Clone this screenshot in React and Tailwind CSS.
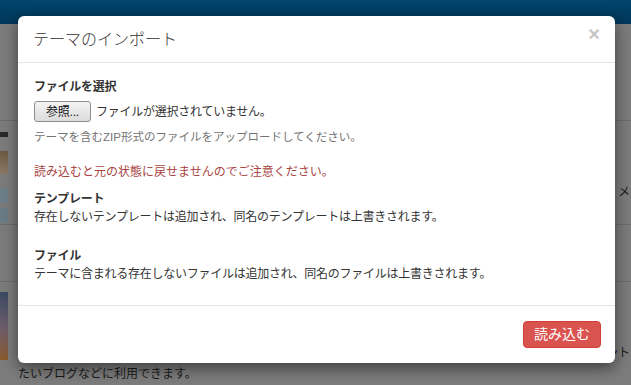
import React from 'react';

const font = { fontFamily: '"Liberation Sans", "Noto Sans CJK JP", sans-serif' };

function BackgroundPage() {
  // dimmed page behind the modal backdrop
  return (
    <div className="flex h-full flex-col bg-[#7c7c7c]">
      <div className="h-[24px] bg-gradient-to-b from-[#02456d] to-[#003759]" />
      <div className="h-[97px] border-b border-[#6c6c6c]" />
      <div className="flex h-[104px] flex-col border-b border-[#6c6c6c] pt-[11px]">
        <div className="h-[5px] w-[8px] bg-[#2a2a2a]" />
        <div className="mt-[14px] h-[23px] w-[8px] bg-gradient-to-b from-[#6e5a44] to-[#8a7a66]" />
        <div className="mt-[14px] h-[15px] w-[8px] bg-[#6d7f88]" />
        <div className="mt-[5px] h-[15px] w-[8px] bg-[#6a7d86]" />
        <div className="flex justify-end pr-[1px]">
          <span className="-mt-[40px] text-[12px] text-[#1a1a1a]">メ</span>
        </div>
      </div>
      <div className="h-[57px] border-b border-[#6c6c6c]" />
      <div className="flex flex-1 flex-col">
        <div className="mt-[10px] h-[68px] w-[8px] bg-gradient-to-b from-[#3b4a63] via-[#6b5d6c] to-[#8a5a2a]" />
        <div className="flex justify-end pr-[1px]">
          <span className="-mt-[16px] text-[12px] text-[#1a1a1a]">ント</span>
        </div>
        <div className="mt-[4px] pl-[18px] text-[12px] leading-[16px] text-[#1a1a1a]">たいブログなどに利用できます。</div>
      </div>
    </div>
  );
}

export default function App() {
  return (
    <div className="relative h-[385px] w-[631px] overflow-hidden" style={font}>
      <BackgroundPage />

      <div className="absolute left-[18px] top-[16px] flex h-[347px] w-[597px] flex-col rounded-[6px] bg-white shadow-[0_5px_15px_rgba(0,0,0,0.5)]">
        {/* header */}
        <div className="flex h-[47px] items-start justify-between border-b border-[#e5e5e5] pl-[15px] pr-[15px]">
          <h4 className="pt-[13px] text-[16px] font-light leading-[22px] text-[#333]">テーマのインポート</h4>
          <button className="pt-[8px] text-[20px] font-bold leading-[20px] text-[#c6c6c6]">×</button>
        </div>

        {/* body */}
        <div className="flex-1 px-[16px] pt-[15px] text-[12px] leading-[18px] tracking-[-0.25px] text-[#333]">
          <label className="block font-bold">ファイルを選択</label>
          <div className="mt-[5px] flex items-center gap-[5px]">
            <span className="flex h-[21px] w-[57px] items-center justify-center rounded-[3px] border border-[#8e8e8e] bg-gradient-to-b from-[#f4f4f4] to-[#dcdcdc] text-[12px] text-[#111]">
              参照...
            </span>
            <span>ファイルが選択されていません。</span>
          </div>
          <p className="mt-[7px] text-[11.5px] leading-[16px] tracking-normal text-[#737373]">テーマを含むZIP形式のファイルをアップロードしてください。</p>
          <p className="mt-[18px] tracking-normal text-[#a94442]">読み込むと元の状態に戻せませんのでご注意ください。</p>
          <div className="mt-[9px]">
            <div className="font-bold">テンプレート</div>
            <div>存在しないテンプレートは追加され、同名のテンプレートは上書きされます。</div>
          </div>
          <div className="mt-[21px]">
            <div className="font-bold">ファイル</div>
            <div>テーマに含まれる存在しないファイルは追加され、同名のファイルは上書きされます。</div>
          </div>
        </div>

        {/* footer */}
        <div className="flex justify-end border-t border-[#e5e5e5] px-[14px] pb-[15px] pt-[15px]">
          <button className="h-[27px] w-[78px] rounded-[4px] border border-[#d43f3a] bg-[#d9534f] text-[14px] text-white">
            読み込む
          </button>
        </div>
      </div>
    </div>
  );
}
